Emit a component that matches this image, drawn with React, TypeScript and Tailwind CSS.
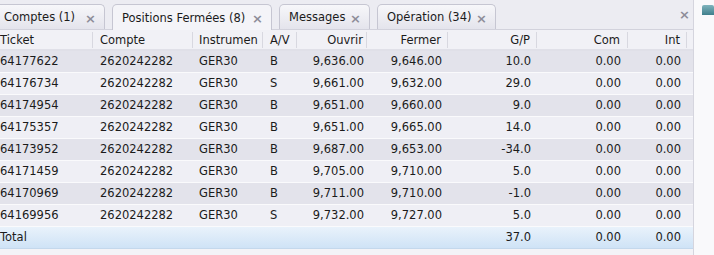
import React from 'react';

const ROWS = [
  ['64177622', '2620242282', 'GER30', 'B', '9,636.00', '9,646.00', '10.0', '0.00', '0.00'],
  ['64176734', '2620242282', 'GER30', 'S', '9,661.00', '9,632.00', '29.0', '0.00', '0.00'],
  ['64174954', '2620242282', 'GER30', 'B', '9,651.00', '9,660.00', '9.0', '0.00', '0.00'],
  ['64175357', '2620242282', 'GER30', 'B', '9,651.00', '9,665.00', '14.0', '0.00', '0.00'],
  ['64173952', '2620242282', 'GER30', 'B', '9,687.00', '9,653.00', '-34.0', '0.00', '0.00'],
  ['64171459', '2620242282', 'GER30', 'B', '9,705.00', '9,710.00', '5.0', '0.00', '0.00'],
  ['64170969', '2620242282', 'GER30', 'B', '9,711.00', '9,710.00', '-1.0', '0.00', '0.00'],
  ['64169956', '2620242282', 'GER30', 'S', '9,732.00', '9,727.00', '5.0', '0.00', '0.00'],
];

const COLS = [
  { label: 'Ticket', w: 'w-[93px]', align: 'text-left pl-0' },
  { label: 'Compte', w: 'w-[100px]', align: 'text-left pl-[7px]' },
  { label: 'Instrumen', w: 'w-[70px]', align: 'text-left pl-[6px]' },
  { label: 'A/V', w: 'w-[34px]', align: 'text-left pl-[7px]' },
  { label: 'Ouvrir', w: 'w-[70px]', align: 'text-right pr-[3px]' },
  { label: 'Fermer', w: 'w-[81px]', align: 'text-right pr-[6px]' },
  { label: 'G/P', w: 'w-[89px]', align: 'text-right pr-[6px]' },
  { label: 'Com', w: 'w-[91px]', align: 'text-right pr-[7px]' },
  { label: 'Int', w: 'w-[59px]', align: 'text-right pr-[6px]' },
];

const TABS = [
  { label: 'Comptes (1)', w: 'w-[111px] -ml-[6px]', active: false },
  { label: 'Positions Fermées (8)', w: 'w-[160px]', active: true },
  { label: 'Messages', w: 'w-[91px]', active: false },
  { label: 'Opération (34)', w: 'w-[119px]', active: false },
];

function Tab({ label, w, active }: { label: string; w: string; active: boolean }) {
  return (
    <div
      className={`${w} h-[25px] flex items-center justify-between pl-[9px] pr-[8px] pt-[2px] rounded-t-[5px] border border-b-0 border-[#c6c6d2] ${
        active ? 'bg-[#f4f4f8] h-[26px] -mb-px' : 'bg-gradient-to-b from-[#f7f7fa] to-[#e4e4ec]'
      }`}
    >
      <span className="text-[11.5px] text-[#1b1b1b]">{label}</span>
      <span className="text-[13px] font-bold text-[#8d8d98] leading-none">×</span>
    </div>
  );
}

export default function App() {
  return (
    <div className="w-[714px] h-[255px] overflow-hidden flex bg-[#f9f9fb]" style={{ fontFamily: '"DejaVu Sans", Verdana, sans-serif' }}>
      <div className="w-[697px] flex flex-col bg-[#f1f1f6] border-r border-[#d5d5de]">
        {/* tab strip */}
        <div className="h-[30px] flex items-end gap-[7px] bg-[#ececf2] border-b border-[#d2d2dc] relative shrink-0">
          {TABS.map((t) => (
            <Tab key={t.label} {...t} />
          ))}
          <span className="absolute right-[3px] top-[8px] text-[13px] font-bold text-[#8d8d98] leading-none">×</span>
        </div>

        {/* header */}
        <div className="flex h-[21px] items-center pt-[1px] bg-[#f1f1f6] border-b-2 border-[#e0e0e8] text-[11.5px] text-[#1b1b1b] shrink-0">
          {COLS.map((c) => (
            <div
              key={c.label}
              className={`${c.w} ${c.align} whitespace-nowrap overflow-hidden border-r border-[#d8d8e0] h-[16px] leading-[16px]`}
            >
              {c.label}
            </div>
          ))}
        </div>

        {/* rows */}
        {ROWS.map((r, ri) => (
          <div
            key={r[0]}
            className={`flex h-[22px] items-center pt-[1px] text-[11.5px] text-[#1b1b1b] border-b border-[#fafafc] shrink-0 ${
              ri % 2 === 0 ? 'bg-[#e3e3eb]' : 'bg-[#efeff5]'
            }`}
          >
            {r.map((v, ci) => (
              <div key={ci} className={`${COLS[ci].w} ${COLS[ci].align} whitespace-nowrap`}>
                {v}
              </div>
            ))}
          </div>
        ))}

        {/* total */}
        <div className="flex h-[22px] items-center pt-[1px] text-[11.5px] text-[#1b1b1b] bg-gradient-to-b from-[#e9f2fb] to-[#cfe3f6] border-b border-[#c4d8ec] shrink-0">
          <div className="w-[93px] pl-0">Total</div>
          <div className="w-[100px]" />
          <div className="w-[70px]" />
          <div className="w-[34px]" />
          <div className="w-[70px]" />
          <div className="w-[81px]" />
          <div className="w-[89px] text-right pr-[6px]">37.0</div>
          <div className="w-[91px] text-right pr-[7px]">0.00</div>
          <div className="w-[59px] text-right pr-[6px]">0.00</div>
        </div>
        <div className="flex-1 bg-[#f3f3f7]" />
      </div>
      <div className="flex-1 pl-[8px] pt-[5px]">
        <div className="w-[12px] h-[10px] rounded-t-[2px] bg-gradient-to-b from-[#7fb4bd] to-[#3f7f8c]" />
      </div>
    </div>
  );
}
